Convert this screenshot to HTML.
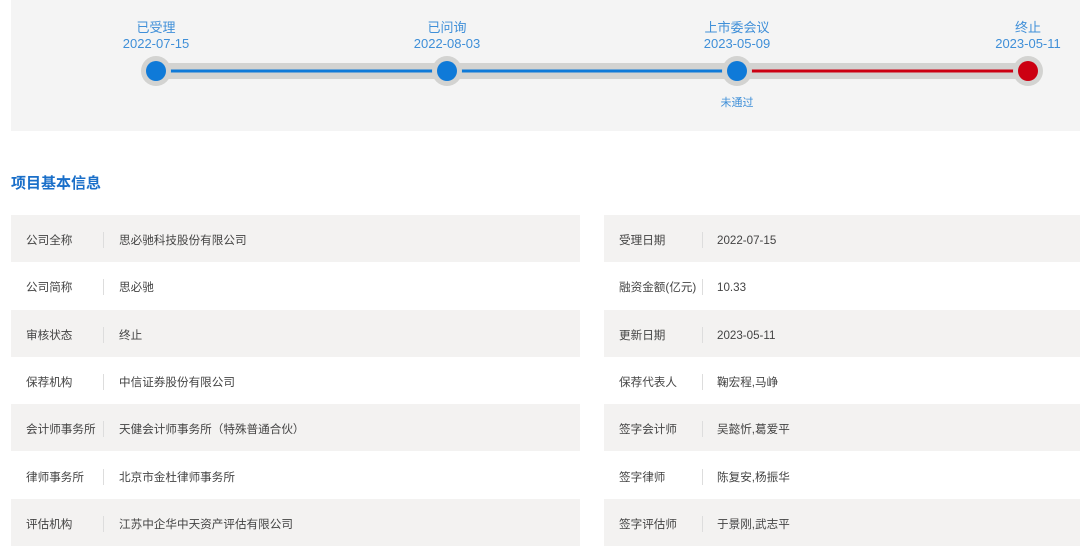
<!DOCTYPE html>
<html><head><meta charset="utf-8"><style>
*{margin:0;padding:0;box-sizing:border-box}
body{width:1080px;height:549px;background:#fff;font-family:"Liberation Sans","Noto Sans CJK SC",sans-serif;position:relative;overflow:hidden}
.top{position:absolute;left:11px;top:0;width:1069px;height:131px;background:#f4f4f4}
.lbl{position:absolute;color:#3f8fd8;font-size:13px;text-align:center;width:120px;line-height:16px}
.t{position:absolute;left:11px;top:172px;font-size:15px;font-weight:bold;color:#1a6fc9}
.row{position:absolute;height:47.3px;font-size:11.6px;color:#444}
.row.g{background:#f3f2f1}
.row span{position:absolute;top:2px;line-height:47px}
.row i{position:absolute;top:17px;width:1px;height:16px;background:#ddd}
</style></head><body>
<div class="top">
<svg width="1069" height="131" style="position:absolute;left:0;top:0">
<line x1="145" y1="71" x2="1017" y2="71" stroke="#d3d3d1" stroke-width="16"/>
<line x1="145" y1="71" x2="726" y2="71" stroke="#0f7ad8" stroke-width="3"/>
<line x1="726" y1="71" x2="1017" y2="71" stroke="#cc0012" stroke-width="3"/>
<g fill="#d3d3d1"><circle cx="145" cy="71" r="15"/><circle cx="436" cy="71" r="15"/><circle cx="726" cy="71" r="15"/><circle cx="1017" cy="71" r="15"/></g>
<circle cx="145" cy="71" r="10" fill="#0f7ad8"/><circle cx="436" cy="71" r="10" fill="#0f7ad8"/><circle cx="726" cy="71" r="10" fill="#0f7ad8"/><circle cx="1017" cy="71" r="10" fill="#cc0012"/>
</svg>
<div class="lbl" style="left:85px;top:20px">已受理<br>2022-07-15</div>
<div class="lbl" style="left:376px;top:20px">已问询<br>2022-08-03</div>
<div class="lbl" style="left:666px;top:20px">上市委会议<br>2023-05-09</div>
<div class="lbl" style="left:957px;top:20px">终止<br>2023-05-11</div>
<div class="lbl" style="left:666px;top:95px;font-size:11px">未通过</div>
</div>
<div class="t">项目基本信息</div>

<div class="row g" style="left:11px;width:569px;top:215px"><span style="left:15px">公司全称</span><i style="left:92px"></i><span style="left:108px">思必驰科技股份有限公司</span></div>
<div class="row" style="left:11px;width:569px;top:262.3px"><span style="left:15px">公司简称</span><i style="left:92px"></i><span style="left:108px">思必驰</span></div>
<div class="row g" style="left:11px;width:569px;top:309.6px"><span style="left:15px">审核状态</span><i style="left:92px"></i><span style="left:108px">终止</span></div>
<div class="row" style="left:11px;width:569px;top:356.9px"><span style="left:15px">保荐机构</span><i style="left:92px"></i><span style="left:108px">中信证券股份有限公司</span></div>
<div class="row g" style="left:11px;width:569px;top:404.2px"><span style="left:15px">会计师事务所</span><i style="left:92px"></i><span style="left:108px">天健会计师事务所（特殊普通合伙）</span></div>
<div class="row" style="left:11px;width:569px;top:451.5px"><span style="left:15px">律师事务所</span><i style="left:92px"></i><span style="left:108px">北京市金杜律师事务所</span></div>
<div class="row g" style="left:11px;width:569px;top:498.8px"><span style="left:15px">评估机构</span><i style="left:92px"></i><span style="left:108px">江苏中企华中天资产评估有限公司</span></div>

<div class="row g" style="left:604px;width:476px;top:215px"><span style="left:15px">受理日期</span><i style="left:98px"></i><span style="left:113px">2022-07-15</span></div>
<div class="row" style="left:604px;width:476px;top:262.3px"><span style="left:15px">融资金额(亿元)</span><i style="left:98px"></i><span style="left:113px">10.33</span></div>
<div class="row g" style="left:604px;width:476px;top:309.6px"><span style="left:15px">更新日期</span><i style="left:98px"></i><span style="left:113px">2023-05-11</span></div>
<div class="row" style="left:604px;width:476px;top:356.9px"><span style="left:15px">保荐代表人</span><i style="left:98px"></i><span style="left:113px">鞠宏程,马峥</span></div>
<div class="row g" style="left:604px;width:476px;top:404.2px"><span style="left:15px">签字会计师</span><i style="left:98px"></i><span style="left:113px">吴懿忻,葛爱平</span></div>
<div class="row" style="left:604px;width:476px;top:451.5px"><span style="left:15px">签字律师</span><i style="left:98px"></i><span style="left:113px">陈复安,杨振华</span></div>
<div class="row g" style="left:604px;width:476px;top:498.8px"><span style="left:15px">签字评估师</span><i style="left:98px"></i><span style="left:113px">于景刚,武志平</span></div>
</body></html>
